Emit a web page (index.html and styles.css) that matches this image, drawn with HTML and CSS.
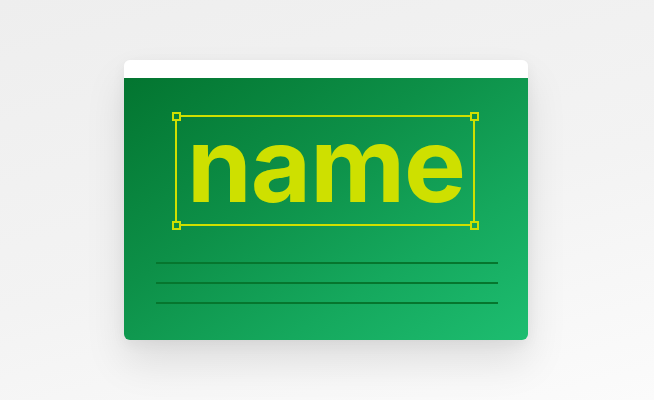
FILE: index.html
```html
<!DOCTYPE html>
<html lang="en">
<head>
<meta charset="utf-8">
<title>name</title>
<link rel="stylesheet" href="styles.css">
</head>
<body>
<main class="stage">
  <section class="card">
    <div class="card-bar"></div>
    <div class="card-body">
      <div class="selection">
        <span class="handle handle-tl"></span>
        <span class="handle handle-tr"></span>
        <span class="handle handle-bl"></span>
        <span class="handle handle-br"></span>
        <span class="word">name</span>
      </div>
      <div class="rules">
        <div class="rule"></div>
        <div class="rule"></div>
        <div class="rule"></div>
      </div>
    </div>
  </section>
</main>
</body>
</html>
```

FILE: styles.css
```css
html, body {
  margin: 0;
  padding: 0;
}
body {
  width: 654px;
  height: 400px;
  overflow: hidden;
  background: linear-gradient(165deg, #eeeeee 0%, #f3f3f3 55%, #fbfbfb 100%);
  font-family: "Liberation Sans", Arial, sans-serif;
}
.stage {
  display: flex;
  justify-content: flex-start;
  padding: 60px 0 0 124px;
}
.card {
  width: 404px;
  height: 280px;
  border-radius: 6px;
  overflow: hidden;
  display: flex;
  flex-direction: column;
  box-shadow: 0 22px 40px rgba(0, 0, 0, 0.10), 0 4px 14px rgba(0, 0, 0, 0.05);
}
.card-bar {
  height: 18px;
  background: #ffffff;
  flex: none;
}
.card-body {
  flex: 1;
  background: linear-gradient(to bottom right, #037530 0%, #0d9048 40%, #15a85d 70%, #1dbd70 100%);
  display: flex;
  flex-direction: column;
  padding: 37px 0 0 51px;
}
.selection {
  position: relative;
  box-sizing: border-box;
  width: 300px;
  height: 111px;
  border: 2px solid #cfe000;
  display: flex;
  align-items: flex-start;
  justify-content: center;
}
.word {
  display: block;
  margin-top: -5px;
  padding-left: 2px;
  font-family: "Inter", "Liberation Sans", Arial, sans-serif;
  font-weight: 700;
  font-size: 104px;
  line-height: 104px;
  letter-spacing: -1px;
  color: #cee000;
}
.handle {
  position: absolute;
  width: 9px;
  height: 9px;
  box-sizing: border-box;
  border: 2px solid #cfe000;
}
.handle-tl { left: -5px; top: -5px; background: #07843b; }
.handle-tr { right: -6px; top: -5px; background: #0c9148; }
.handle-bl { left: -5px; bottom: -6px; background: #0a8d43; }
.handle-br { right: -6px; bottom: -6px; background: #14a45a; }
.rules {
  display: flex;
  flex-direction: column;
  gap: 18px;
  margin: 36px 0 0 -19px;
  width: 342px;
}
.rule {
  height: 2px;
  background: #06762e;
}
```
